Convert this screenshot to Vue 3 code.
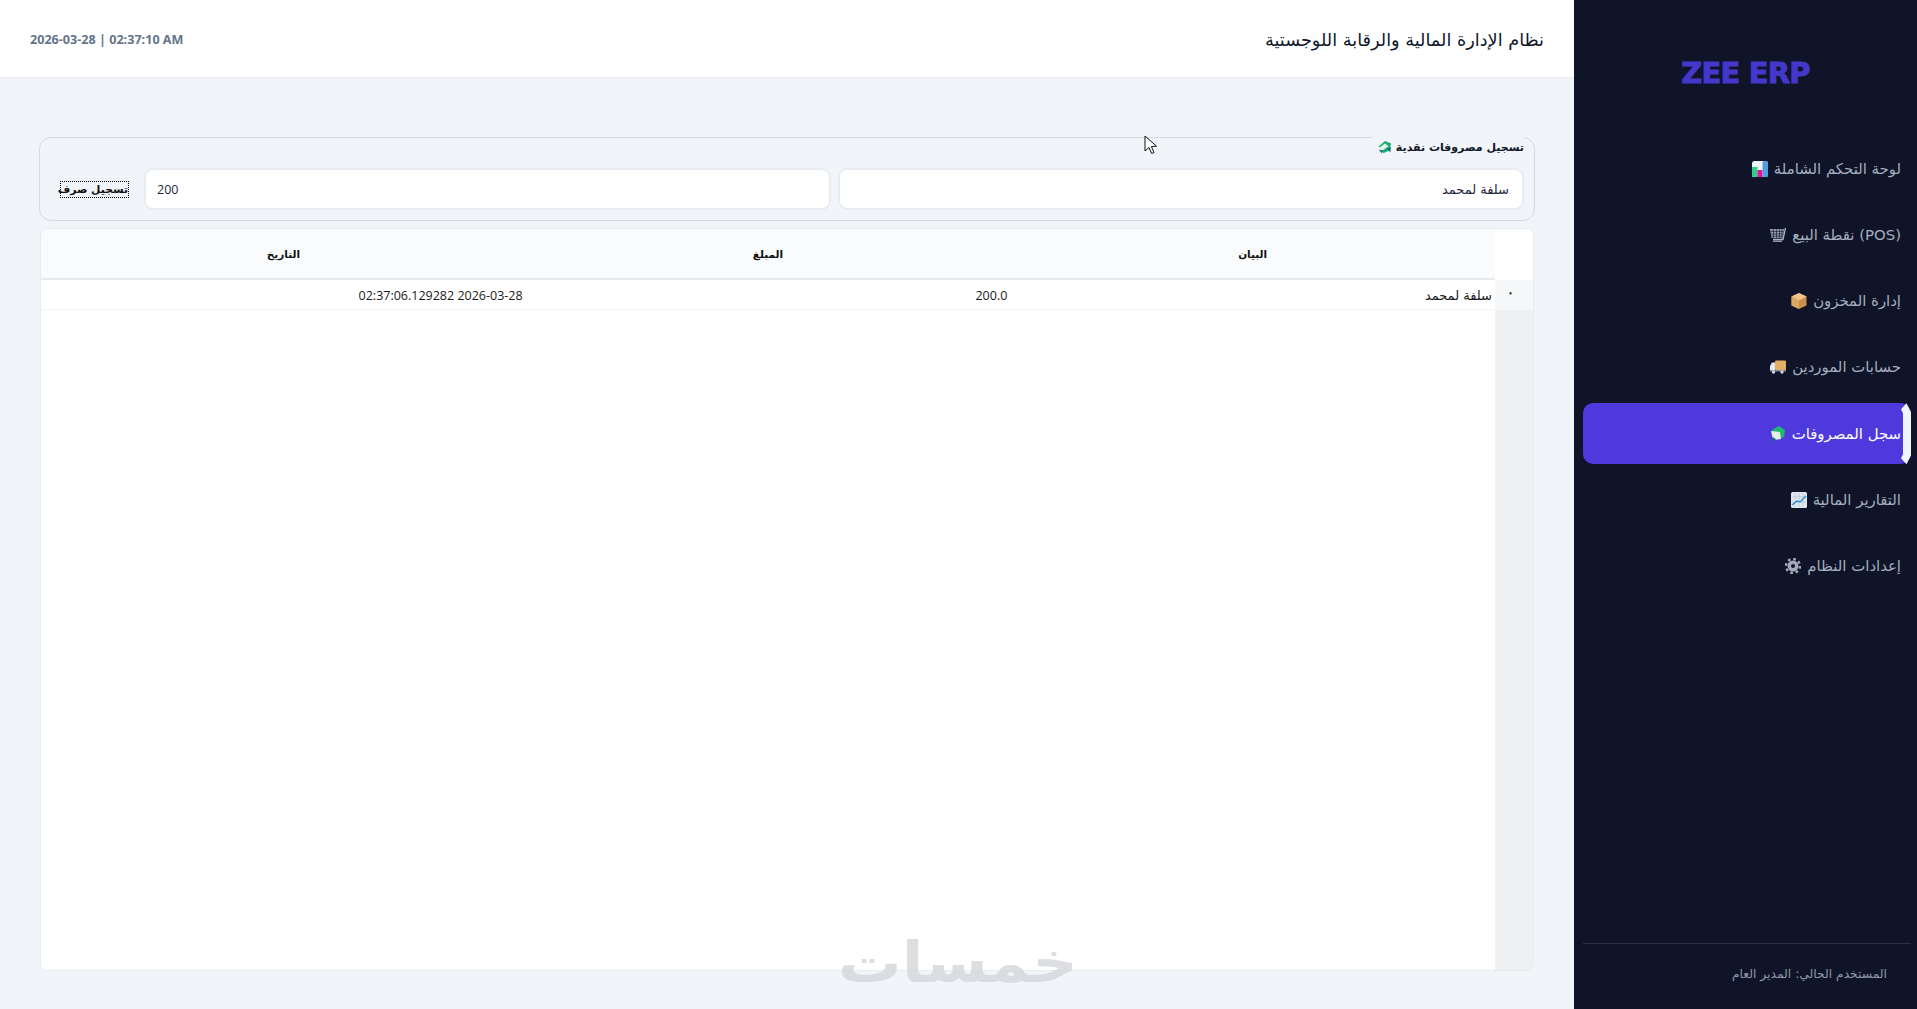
<script setup>
const nav = [
  { label: 'لوحة التحكم الشاملة', icon: 'chart' },
  { label: '(POS) نقطة البيع', icon: 'cart' },
  { label: 'إدارة المخزون', icon: 'box' },
  { label: 'حسابات الموردين', icon: 'truck' },
  { label: 'سجل المصروفات', icon: 'money', active: true },
  { label: 'التقارير المالية', icon: 'trend' },
  { label: 'إعدادات النظام', icon: 'gear' },
]
</script>

<template>
  <div class="app">
    <main class="main">
      <header class="top">
        <span class="date">2026-03-28 | 02:37:10 AM</span>
        <h1 class="title" dir="rtl">نظام الإدارة المالية والرقابة اللوجستية</h1>
      </header>
      <section class="content">
        <fieldset class="card" dir="rtl">
          <legend class="legend">
            <span>تسجيل مصروفات نقدية</span>
            <svg class="ico small" viewBox="0 0 16 16"><path d="M1 7 8 1l7 3-2 8-7 3z" fill="#1fae6a"/><path d="M1 9l7-5 4 3-7 5z" fill="#e6f4ea"/><path d="M1 11l5 1-2 3z" fill="#14708c"/><path d="M10 10l5-2-1 6z" fill="#14708c"/></svg>
          </legend>
          <div class="form">
            <input class="field" value="سلفة لمحمد" />
            <input class="field num" dir="ltr" value="200" />
            <button class="submit" type="button">تسجيل صرف</button>
          </div>
        </fieldset>
        <div class="table">
          <div class="th">التاريخ</div>
          <div class="th">المبلغ</div>
          <div class="th">البيان</div>
          <div class="th corner"></div>
          <div class="td" dir="rtl">2026-03-28 02:37:06.129282</div>
          <div class="td">200.0</div>
          <div class="td ar" dir="rtl">سلفة لمحمد</div>
          <div class="td idx">٠</div>
          <div class="blank"></div>
          <div class="gutter"></div>
        </div>
      </section>
      <div class="watermark" dir="rtl">خمسات</div>
      <svg class="cursor" viewBox="0 0 13 21" width="13" height="21"><path d="M1 1v15l4-3.500 2.600 6 2.400-1-2.600-6 5.100-.3z" fill="#fff" stroke="#111" stroke-width="1"/></svg>
    </main>

    <aside class="side" dir="rtl">
      <div class="logo" dir="ltr">ZEE ERP</div>
      <nav class="nav">
        <a v-for="n in nav" :key="n.icon" class="item" :class="{ active: n.active }">
          <span>{{ n.label }}</span>
          <svg v-if="n.icon === 'chart'" class="ico" viewBox="0 0 16 16"><rect width="16" height="16" rx="2.500" fill="#eef2f5"/><rect x="0" y="6" width="5.500" height="10" fill="#2fd08a"/><rect x="5.500" y="9" width="5" height="7" fill="#e7109a"/><rect x="10.500" y="0" width="5.500" height="16" rx="1.500" fill="#4f9fe0"/></svg>
          <svg v-else-if="n.icon === 'cart'" class="ico" viewBox="0 0 16 16"><path d="M0 2h14l-1 9H1.500z" fill="#929dab"/><path d="M.5 4.500h13M.5 7h13M1 9.200h12M3.500 2v9M6.500 2v9M9.500 2v9M12 2v9" stroke="#1c2233" stroke-width=".7"/><path d="M15.500 1l-2.500 11.500H3" stroke="#aab4c0" stroke-width="1.300" fill="none"/><rect x="3" y="13.500" width="9" height="1.500" fill="#8d99a6"/></svg>
          <svg v-else-if="n.icon === 'box'" class="ico" viewBox="0 0 16 16"><path d="M8 0l7.500 3.500v9L8 16 .5 12.500v-9z" fill="#c98f4e"/><path d="M8 0l7.500 3.500L8 7.500.5 3.500z" fill="#eec48a"/><path d="M8 7.500V16L.5 12.500v-9z" fill="#dba862"/></svg>
          <svg v-else-if="n.icon === 'truck'" class="ico" viewBox="0 0 16 16"><rect x="5" y="1.500" width="11" height="9.500" rx="1" fill="#e6ad64"/><path d="M0 7l2-3.500h3V11H0z" fill="#e3ebf2"/><rect x="0" y="11" width="16" height="1.500" fill="#7f8aa0"/><circle cx="3.500" cy="13" r="1.700" fill="#cbd5e1"/><circle cx="12" cy="13" r="1.700" fill="#cbd5e1"/></svg>
          <svg v-else-if="n.icon === 'money'" class="ico" viewBox="0 0 16 16"><path d="M2 4l7-4 6 4-1 7-6 2z" fill="#22b86c"/><path d="M1 5l9 1 1 7-8 1z" fill="#e3f2e8"/><path d="M2 11l4 2-3 3z" fill="#12657d"/></svg>
          <svg v-else-if="n.icon === 'trend'" class="ico" viewBox="0 0 16 16"><rect width="16" height="16" rx="1.500" fill="#dfe6ee"/><path d="M4 1v14M8 1v14M12 1v14M1 5h14M1 10h14" stroke="#b8c2ce" stroke-width=".7"/><path d="M1 13l5-4 3 1 6-6" stroke="#2e8fd8" stroke-width="1.500" fill="none"/></svg>
          <svg v-else class="ico" viewBox="0 0 16 16"><circle cx="8" cy="8" r="5.500" fill="#a2abb7"/><circle cx="8" cy="8" r="7" fill="none" stroke="#a2abb7" stroke-width="2.400" stroke-dasharray="2.700 2.800"/><circle cx="8" cy="8" r="2" fill="#0f1428"/></svg>
          <i v-if="n.active" class="tab"></i>
        </a>
      </nav>
      <footer class="foot">المستخدم الحالي: المدير العام</footer>
    </aside>
  </div>
</template>

<style scoped>
.app { display: flex; height: 1009px; overflow: hidden; font-family: "DejaVu Sans", sans-serif; }
.main { position: relative; flex: 1; min-width: 0; display: flex; flex-direction: column; background: #f1f4f8; }
.top { height: 78px; box-sizing: border-box; flex: none; border-bottom: 1px solid #e6e9ed; background: #fff; display: flex; align-items: center; justify-content: space-between; padding: 0 30px; }
.date { margin-top: 1px; font-size: 12.600px; font-weight: 700; color: #64748b; font-family: "Open Sans", sans-serif; }
.title { margin: 2px 0 0; font-size: 17.700px; font-weight: 400; color: #0f172a; }
.content { flex: 1; display: flex; flex-direction: column; padding: 39px 39px 38px; min-height: 0; }
.card { margin: 0; padding: 0 10px 10px 20px; border: 1px solid #d5dae1; border-radius: 12px; min-width: 0; }
.legend { padding: 20px 0 0 6px; margin: 0; height: 40px; box-sizing: border-box; display: flex; gap: 4px; align-items: center; font-size: 11px; font-weight: 700; color: #0f172a; }
.form { display: flex; align-items: center; gap: 7px; margin-top: 11px; }
.field { flex: 1; min-width: 0; height: 42px; box-sizing: border-box; border: 2px solid #e8ecf1; border-radius: 9px; background: #fff; padding: 0 13px; font: 13px "DejaVu Sans", sans-serif; color: #1e293b; outline: none; }
.num { font-family: "Open Sans", sans-serif; font-size: 12.500px; padding: 0 15px 0 11px; }
.submit { flex: none; width: 69px; height: 17px; margin-inline-start: 8px; padding: 0; border: 1px dotted #000; background: transparent; font: 700 10.800px "DejaVu Sans", sans-serif; color: #111; white-space: nowrap; }
.table { flex: 1; min-height: 0; margin-top: 7px; margin-left: 1px; margin-right: 1px; display: grid; grid-template-columns: 1fr 1fr 1fr 38px; grid-template-rows: 51px 30px 1fr; border: 1px solid #e9ebee; border-radius: 8px; overflow: hidden; background: #fff; }
.th { display: flex; align-items: center; justify-content: center; background: #fafbfc; border-bottom: 2px solid #e6e9ed; font-size: 10.500px; font-weight: 700; color: #111; }
.corner { background: #fff; border-bottom: 0; }
.td { display: flex; align-items: center; justify-content: flex-end; padding: 1px 3px 0 0; font: 12.500px "Open Sans", sans-serif; color: #1a1a1a; border-bottom: 1px solid #f2f3f5; white-space: nowrap; }
.td[dir="rtl"] { justify-content: flex-start; }
.ar { font-family: "DejaVu Sans", sans-serif; font-size: 13px; }
.idx { justify-content: center; background: #f5f7f8; padding: 0 6px 6px 0; font-weight: 700; font-size: 13px; border-bottom: 0; }
.blank { grid-column: 1 / 4; background: #fff; }
.gutter { background: #eff0f1; }
.watermark { position: absolute; left: 843px; top: 928px; width: 230px; height: 70px; text-align: center; font-size: 56px; font-weight: 700; line-height: 70px; color: #d4d7db; opacity: .8; transform: scaleX(1.130); pointer-events: none; }
.cursor { position: absolute; left: 1144px; top: 135px; }
.side { width: 343px; flex: none; background: #0f1428; display: flex; flex-direction: column; }
.logo { margin-top: 56px; height: 34px; text-align: center; font: 900 29px/34px "DejaVu Sans", sans-serif; color: #4338ca; -webkit-text-stroke: 1px #4338ca; letter-spacing: -.8px; }
.nav { margin-top: 48px; display: flex; flex-direction: column; gap: 5.300px; padding: 0 6px 0 9px; }
.item { position: relative; height: 61px; box-sizing: border-box; display: flex; align-items: center; gap: 6px; padding-right: 10px; font-size: 14.900px; color: #a4afbf; border-radius: 10px; }
.item.active { background: #4f39dd; color: #fff; }
.tab { position: absolute; right: 0; top: 0; bottom: 0; width: 10px; background: #f1f5f9; clip-path: polygon(55% 0, 100% 9px, 100% calc(100% - 9px), 55% 100%, 0 calc(100% - 6px), 20% calc(100% - 10px), 20% 10px, 0 6px); }
.ico { width: 16px; height: 16px; flex: none; }
.small { width: 14px; height: 14px; }
.foot { margin-top: auto; margin-left: 9px; margin-right: 6px; height: 66px; box-sizing: border-box; border-top: 1px solid #2b3145; padding: 23px 24px 0 0; font-size: 12.300px; color: #8e98aa; }
</style>
